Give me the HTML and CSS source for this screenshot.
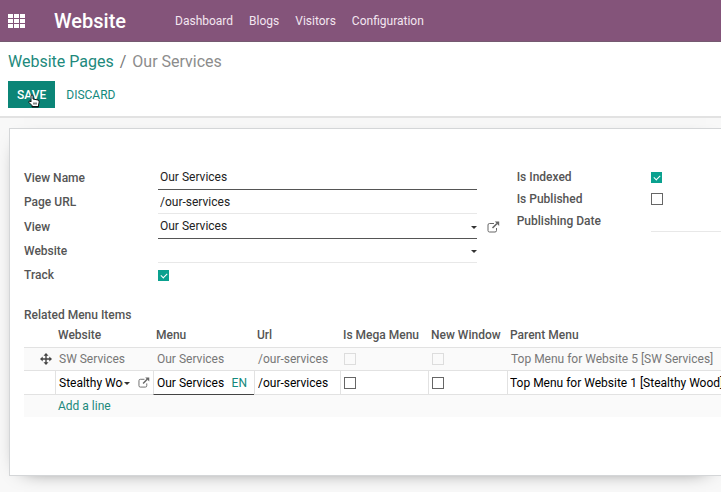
FILE: index.html
```html
<!DOCTYPE html>
<html lang="en">
<head>
    <meta charset="UTF-8">
    <meta name="viewport" content="width=device-width, initial-scale=1.0">
    <title>Our Services - Website Pages</title>
    <link rel="stylesheet" href="styles.css">
</head>
<body>
    <svg class="symbols" aria-hidden="true">
        <symbol id="external" viewBox="0 0 13 12">
            <path d="M7 2.5H2.5Q1 2.5 1 4V9.500Q1 11 2.500 11H8Q9.500 11 9.500 9.500V7" fill="none" stroke="currentColor" stroke-width="1"/>
            <path d="M5.500 7L10 2.500" fill="none" stroke="currentColor" stroke-width="1.600"/>
            <path d="M7.800 0.500H12.200V5Z" fill="currentColor"/>
        </symbol>
    </svg>

    <header class="navbar">
        <button class="apps" aria-label="Applications">
            <svg width="17" height="14" viewBox="0 0 17 14" fill="currentColor">
                <path d="M0 0h5v4H0zM6 0h5v4H6zM12 0h5v4h-5zM0 5h5v4H0zM6 5h5v4H6zM12 5h5v4h-5zM0 10h5v4H0zM6 10h5v4H6zM12 10h5v4h-5z"/>
            </svg>
        </button>
        <a class="brand" href="#">Website</a>
        <nav class="menu">
            <a href="#">Dashboard</a>
            <a href="#">Blogs</a>
            <a href="#">Visitors</a>
            <a href="#">Configuration</a>
        </nav>
    </header>

    <div class="controlPanel">
        <div class="breadcrumb">
            <a href="#">Website Pages</a>
            <span class="slash">/</span>
            <span>Our Services</span>
        </div>
        <div class="buttons">
            <button class="save">SAVE
                <svg class="pointer" width="12" height="14" viewBox="0 0 12 14">
                    <path d="M3 1.500Q4 .2 5 1.500V5L10 6Q11.300 6.300 11.200 8L10.500 11V13H4V11.500L1 8.500Q.4 7 2 7L3 8Z" fill="#fff" stroke="#111" stroke-width="1"/>
                    <path d="M4 12.500H10.500M6 8.500V10.500M8 8.500V10.500" stroke="#111" stroke-width="1"/>
                </svg>
            </button>
            <button class="discard">DISCARD</button>
        </div>
    </div>

    <main class="sheet">
        <div class="groups">
            <div class="group">
                <div class="field required">
                    <label for="viewName">View Name</label>
                    <input type="text" id="viewName" value="Our Services">
                </div>
                <div class="field">
                    <label for="pageUrl">Page URL</label>
                    <input type="text" id="pageUrl" value="/our-services">
                </div>
                <div class="field required">
                    <label for="view">View</label>
                    <div class="dropdown">
                        <select id="view"><option>Our Services</option></select>
                    </div>
                    <button class="open" aria-label="Open view"><svg width="13" height="12"><use href="#external"/></svg></button>
                </div>
                <div class="field">
                    <label for="website">Website</label>
                    <div class="dropdown">
                        <select id="website"><option></option></select>
                    </div>
                </div>
                <div class="field">
                    <label for="track">Track</label>
                    <input type="checkbox" id="track" checked>
                </div>
            </div>

            <div class="group side">
                <div class="field">
                    <label for="indexed">Is Indexed</label>
                    <input type="checkbox" id="indexed" checked>
                </div>
                <div class="field">
                    <label for="published">Is Published</label>
                    <input type="checkbox" id="published">
                </div>
                <div class="field">
                    <label for="publishDate">Publishing Date</label>
                    <input type="text" id="publishDate">
                </div>
            </div>
        </div>

        <h2>Related Menu Items</h2>
        <table class="items">
            <colgroup>
                <col class="colHandle">
                <col class="colWebsite">
                <col class="colMenu">
                <col class="colUrl">
                <col class="colMega">
                <col class="colWindow">
                <col>
            </colgroup>
            <thead>
                <tr>
                    <th></th>
                    <th>Website</th>
                    <th>Menu</th>
                    <th>Url</th>
                    <th>Is Mega Menu</th>
                    <th>New Window</th>
                    <th>Parent Menu</th>
                </tr>
            </thead>
            <tbody>
                <tr class="muted">
                    <td class="handle">
                        <svg width="12" height="12" viewBox="0 0 12 12" fill="currentColor">
                            <path d="M6 0L8.500 2.700H6.700V5.300H9.300V3.500L12 6L9.300 8.500V6.700H6.700V9.300H8.500L6 12L3.500 9.300H5.300V6.700H2.700V8.500L0 6L2.700 3.500V5.300H5.300V2.700H3.500Z"/>
                        </svg>
                    </td>
                    <td>SW Services</td>
                    <td>Our Services</td>
                    <td>/our-services</td>
                    <td><input type="checkbox" aria-label="Is Mega Menu" disabled></td>
                    <td><input type="checkbox" aria-label="New Window" disabled></td>
                    <td>Top Menu for Website 5 [SW Services]</td>
                </tr>
                <tr class="editing">
                    <td></td>
                    <td>
                        <div class="cell">
                            <div class="dropdown">
                                <select aria-label="Website"><option>Stealthy Wood</option></select>
                            </div>
                            <button class="open" aria-label="Open website"><svg width="12" height="11"><use href="#external"/></svg></button>
                        </div>
                    </td>
                    <td class="active">
                        <div class="cell">
                            <input type="text" aria-label="Menu" value="Our Services">
                            <button class="lang">EN</button>
                        </div>
                    </td>
                    <td><div class="cell"><input type="text" aria-label="Url" value="/our-services"></div></td>
                    <td><input type="checkbox" aria-label="Is Mega Menu"></td>
                    <td><input type="checkbox" aria-label="New Window"></td>
                    <td><div class="cell"><input type="text" aria-label="Parent Menu" value="Top Menu for Website 1 [Stealthy Wood]"></div></td>
                </tr>
                <tr class="add">
                    <td></td>
                    <td colspan="6"><a href="#">Add a line</a></td>
                </tr>
            </tbody>
        </table>
    </main>
</body>
</html>
```

FILE: styles.css
```css
* {
    box-sizing: border-box;
}

body {
    margin: 0;
    font-family: Roboto, "Liberation Sans", sans-serif;
    font-size: 12px;
    line-height: 16px;
    color: #222;
    background-color: #f8f8f8;
}

a {
    color: #21897c;
    text-decoration: none;
}

button {
    font: inherit;
    border: none;
    background: none;
    padding: 0;
    cursor: pointer;
}

svg {
    display: block;
}

.symbols {
    display: none;
}

/* Top bar */
.navbar {
    display: flex;
    align-items: center;
    height: 42px;
    padding: 0 8px;
    background-color: #84547a;
    border-bottom: 1px solid #755a70;
}

.apps {
    color: #fff;
}

.brand {
    margin-left: 29px;
    font-size: 20px;
    line-height: 24px;
    font-weight: 500;
    color: #fff;
}

.menu {
    display: flex;
    gap: 16px;
    margin-left: 49px;
}

.menu a {
    color: #f3e6f0;
}

/* Breadcrumb and buttons */
.controlPanel {
    padding: 10px 8px 8px;
    background-color: #fff;
    border-bottom: 2px solid #e2e2e2;
}

.breadcrumb {
    display: flex;
    gap: 6px;
    font-size: 16px;
    line-height: 20px;
    color: #8c8c8c;
}

.slash {
    color: #777;
}

.buttons {
    display: flex;
    align-items: center;
    gap: 11px;
    margin-top: 9px;
}

.save {
    position: relative;
    height: 27px;
    padding: 0 9px;
    font-weight: 500;
    color: #fff;
    background-color: #0b8577;
}

.pointer {
    position: absolute;
    top: 13px;
    left: 20px;
}

.discard {
    color: #12897c;
}

/* Form sheet */
.sheet {
    margin: 10px 0 16px 9px;
    padding: 36px 0 58px 14px;
    background-color: #fff;
    border: 1px solid #d4d6d8;
    border-right: none;
    box-shadow: 0 5px 20px -15px #000;
}

.groups {
    display: grid;
    grid-template-columns: 7fr 3fr;
    gap: 16px;
}

.field {
    display: flex;
    align-items: center;
    height: 24px;
}

.field.required {
    height: 25px;
}

.side {
    padding-top: 1px;
}

.side .field {
    height: 22px;
}

label,
th,
h2 {
    font-size: 12px;
    font-weight: 500;
    color: #555;
}

label {
    flex: 0 0 134px;
}

.dropdown {
    position: relative;
    flex: 1;
    min-width: 0;
    height: 100%;
}

.dropdown::after {
    content: "";
    position: absolute;
    top: calc(50% - 1px);
    right: 0;
    border: 3px solid transparent;
    border-top-color: #333;
    border-bottom: none;
}

input[type="text"],
select {
    appearance: none;
    flex: 1;
    width: 100%;
    min-width: 0;
    height: 100%;
    padding: 0 2px;
    font: inherit;
    color: #222;
    background: none;
    border: none;
    border-radius: 0;
    outline: none;
}

.field input[type="text"],
.field select {
    border-bottom: 1px solid #e8e8e8;
}

.field.required input,
.field.required select {
    border-bottom-color: #555;
}

.group:not(.side) .field {
    padding-right: 24px;
}

.open {
    flex: none;
    color: #666;
}

.field .open {
    margin: 0 -23px 0 10px;
}

input[type="checkbox"] {
    appearance: none;
    display: block;
    position: relative;
    width: 12px;
    height: 12px;
    margin: 0;
    background-color: #fff;
    border: 1px solid #666;
}

input[type="checkbox"]:checked {
    width: 11px;
    height: 11px;
    background-color: #0aa18f;
    border-color: #0aa18f;
}

input[type="checkbox"]:checked::after {
    content: "";
    position: absolute;
    top: 2px;
    left: 2px;
    width: 5px;
    height: 3px;
    border: solid #fff;
    border-width: 0 0 1px 1px;
    transform: rotate(-45deg);
}

input[type="checkbox"]:disabled {
    background-color: #fafafa;
    border-color: #ddd;
}

/* Menu items list */
h2 {
    margin: 20px 0 0;
}

.items {
    width: 100%;
    table-layout: fixed;
    border-collapse: separate;
    border-spacing: 0;
}

.colHandle {
    width: 31px;
}

.colWebsite {
    width: 98px;
}

.colMenu {
    width: 101px;
}

.colUrl {
    width: 86px;
}

.colMega {
    width: 88px;
}

.colWindow {
    width: 79px;
}

th,
td {
    height: 24px;
    padding: 0 0 0 4px;
    text-align: left;
    white-space: nowrap;
    border-bottom: 1px solid #e2e2e2;
}

th {
    height: 25px;
    padding-left: 3px;
}

.muted td {
    height: 23px;
    color: #777;
    background-color: #fafafa;
}

.muted .handle {
    padding-left: 16px;
    color: #444;
}

.editing td + td {
    border-left: 1px solid #e2e2e2;
    padding-left: 3px;
}

.editing td.active {
    border-bottom-color: #444;
}

.editing td:last-child {
    padding-left: 2px;
}

.cell {
    display: flex;
    align-items: center;
    height: 23px;
}

.cell input[type="text"],
.cell select {
    padding: 0;
    color: #000;
}

.cell .dropdown select {
    padding-right: 7px;
}

.cell .open {
    margin: 0 3px 0 8px;
}

.lang {
    margin-right: 7px;
    color: #12897c;
}

.add td {
    height: 22px;
    background-color: #fafafa;
    border-bottom: none;
    padding-left: 3px;
}
```
